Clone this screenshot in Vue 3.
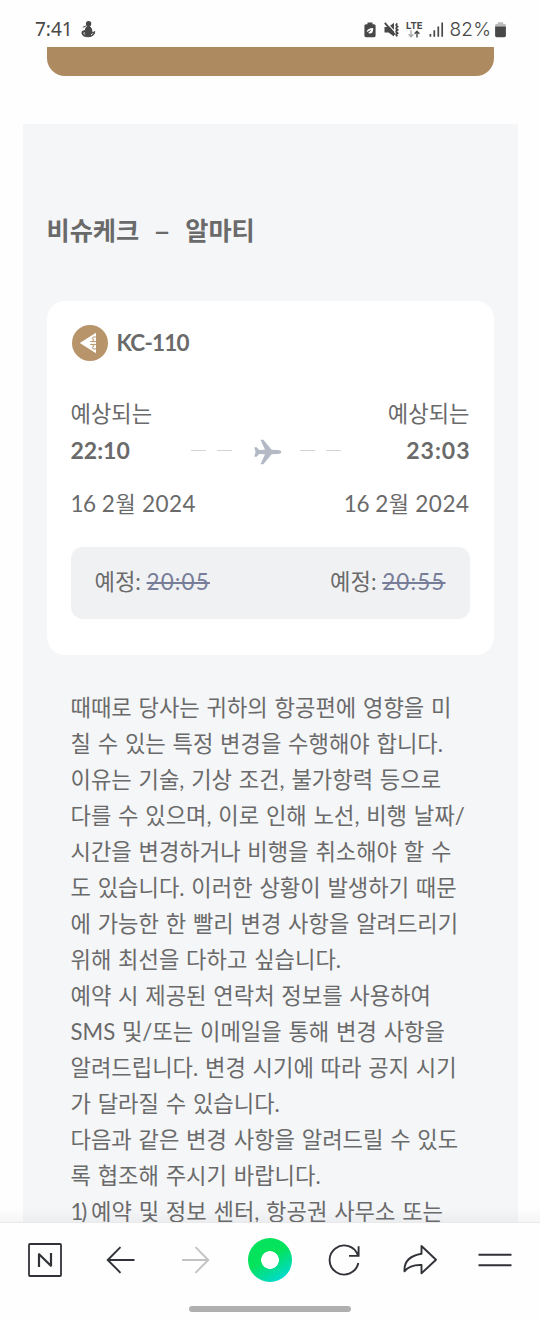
<template>
  <div class="screen">
    <header class="status">
      <span class="clock">7:41</span>
      <svg class="seal" width="15" height="17" viewBox="0 0 15 17">
        <circle cx="7.6" cy="2.8" r="2.7" fill="#484848" />
        <path d="M1.8 6.3 5.5 4.8M7.3 5Q4 6.5 4.4 9.2L1 10.6Q.2 15.8 7.2 15.8 13.6 15.3 13.8 10.6L11.2 11.8Q11 7.3 8.6 5.3z" fill="#484848" stroke="#484848" stroke-width="1" />
        <path d="M3.3 11.4q-.8 1.2.6 2.1M11.6 12.4q-.5 1.2-1.5 1.4" stroke="#fff" stroke-width="1" fill="none" />
      </svg>
      <div class="status-icons">
        <svg width="12" height="16" viewBox="0 0 12 16">
          <path d="M3.5.4h5v1.8H10q1.6 0 1.6 1.6v9.8q0 1.6-1.6 1.6H2Q.4 15.2.4 13.6V3.8Q.4 2.2 2 2.2h1.5z" fill="#484848" />
          <path d="M2.7 10Q3 6.3 9.2 6q.3 5.6-3.4 5.6Q4.6 11.6 4 10.6L6.8 8.3" fill="#fff" />
          <path d="M2.7 11.7 6.7 8.3" stroke="#484848" stroke-width=".8" />
        </svg>
        <svg class="mute" width="16" height="16" viewBox="0 0 16 16">
          <path d="M.5 5h4L10 .8v13.6L4.500 10.600h-4z" fill="#484848" />
          <path d="M2.600.6 10.800 9.600" stroke="#fefefe" stroke-width="1.2" />
          <path d="M.8.8 10.800 12.600" stroke="#484848" stroke-width="1.8" />
          <path d="M13.400 1.500q-2.400 1.600 0 3.200-2.400 1.600 0 3.200-2.400 1.600 0 3.200-2.400 1.400 0 3.200" fill="none" stroke="#484848" stroke-width="1.9" />
        </svg>
        <div class="lte">
          <span>LTE</span>
          <svg width="12" height="8" viewBox="0 0 12 8" fill="none" stroke-width="1.4">
            <path d="M3 .2v6.500M.6 4.200 3 6.800 5.400 4.200" stroke="#aaa" />
            <path d="M9 7.600V1.300M6.600 3.800 9 1.200l2.400 2.600" stroke="#484848" />
          </svg>
        </div>
        <svg class="signal" width="15" height="15" viewBox="0 0 15 15" stroke="#484848" stroke-width="1.7">
          <path d="M1.400 12v2.800M5.300 8.200v6.600M9.300 4.500v10.300M13.200.5v14.300" />
        </svg>
        <span class="percent">82%</span>
        <svg class="battery" width="11" height="16" viewBox="0 0 11 16">
          <path d="M3 .2h5v1.600h1.400q1.500 0 1.500 1.500v1.500H.1V3.300q0-1.500 1.500-1.500H3z" fill="#bbb" />
          <path d="M.1 4.600h10.800v9q0 1.700-1.500 1.700H1.600Q.1 15.300.1 13.600z" fill="#484848" />
        </svg>
      </div>
    </header>

    <main class="content">
      <div class="banner"></div>
      <section class="panel">
        <h2 class="route"><span>비슈케크</span><span class="dash">–</span><span>알마티</span></h2>

        <div class="card">
          <div class="flight">
            <svg width="36" height="36" viewBox="0 0 36 36">
              <circle cx="18" cy="18" r="18" fill="#b8946a" />
              <path d="M7.800 18 24 7.800v20.400z" fill="#fff" />
              <path d="M24.500 12h-2.600q-1.900.2-1.600 1.700.4 1.100 1.800.7M24.500 16.600h-6.300M24.500 19.400h-6.300M21.200 14.800v1.800M21.200 19.400v1.800M24.500 24h-2.600q-1.900-.2-1.600-1.700.4-1.100 1.800-.7" fill="none" stroke="#b8946a" stroke-width="1" />
            </svg>
            <span>KC-110</span>
          </div>

          <div class="row expected">
            <span>예상되는</span>
            <span>예상되는</span>
          </div>
          <div class="row times">
            <b>22:10</b>
            <div class="path">
              <i></i><i></i>
              <svg width="28" height="26" viewBox="0 0 28 26">
                <path d="M.2 8.200h2.500l2.600 2.900 5.700-.4L6.500.7h2.900l8.200 10 5.900.2q3.900.5 3.900 2.100 0 1.600-3.900 2.100l-5.900.2-8.200 10H6.500l4.500-10-5.700-.4-2.600 2.900H.2L1.600 13z" fill="#b4b9c6" />
              </svg>
              <i></i><i></i>
            </div>
            <b class="arrival">23:03</b>
          </div>
          <div class="row dates">
            <span><span class="day">16</span> 2<em>월</em> 2024</span>
            <span><span class="day">16</span> 2<em>월</em> 2024</span>
          </div>

          <div class="row planned">
            <span>예정: <s>20:05</s></span>
            <span>예정: <s>20:55</s></span>
          </div>
        </div>

        <div class="notice">
          <p v-for="line in notice" :key="line">{{ line }}</p>
          <p><span class="number">1)</span> 예약 및 정보 센터, 항공권 사무소 또는</p>
        </div>
      </section>
    </main>

    <nav class="toolbar">
      <div class="buttons">
        <svg width="34" height="34" viewBox="0 0 34 34" fill="none" stroke="#303238" stroke-width="1.8">
          <rect x="1" y="1" width="32" height="32" rx="1" />
          <path d="M11 24V10.500M23 23.500V10M10.600 10.800 23.400 23.200" stroke-width="2.2" />
        </svg>
        <svg width="34" height="34" viewBox="0 0 34 34" fill="none" stroke="#303238" stroke-width="1.9">
          <path d="M31.500 17H5M17.500 4.200 4.700 17 17.500 29.800" />
        </svg>
        <svg width="34" height="34" viewBox="0 0 34 34" fill="none" stroke="#c3c3c3" stroke-width="1.9">
          <path d="M4 17h26M17.500 4.200 30.300 17 17.500 29.800" />
        </svg>
        <div class="green-dot"></div>
        <svg width="34" height="34" viewBox="0 0 34 34" fill="none" stroke="#303238" stroke-width="1.9">
          <path d="M30 12.800A14.500 14.500 0 1 0 30.300 20M21 12.900h9.600V3.300" />
        </svg>
        <svg width="34" height="34" viewBox="0 0 34 34" fill="none" stroke="#303238" stroke-width="1.9" stroke-linejoin="round">
          <path d="M18.500 3 33 16.700 18.500 30.300V22Q7 21.500 1.500 28.300 .5 14 18.500 10.800z" />
        </svg>
        <svg width="34" height="34" viewBox="0 0 34 34" stroke="#303238" stroke-width="1.9">
          <path d="M.5 11.800h33M.5 22.300h33" />
        </svg>
      </div>
      <div class="home"></div>
    </nav>
  </div>
</template>

<script setup>
const notice = [
  '때때로 당사는 귀하의 항공편에 영향을 미',
  '칠 수 있는 특정 변경을 수행해야 합니다.',
  '이유는 기술, 기상 조건, 불가항력 등으로',
  '다를 수 있으며, 이로 인해 노선, 비행 날짜/',
  '시간을 변경하거나 비행을 취소해야 할 수',
  '도 있습니다. 이러한 상황이 발생하기 때문',
  '에 가능한 한 빨리 변경 사항을 알려드리기',
  '위해 최선을 다하고 싶습니다.',
  '예약 시 제공된 연락처 정보를 사용하여',
  'SMS 및/또는 이메일을 통해 변경 사항을',
  '알려드립니다. 변경 시기에 따라 공지 시기',
  '가 달라질 수 있습니다.',
  '다음과 같은 변경 사항을 알려드릴 수 있도',
  '록 협조해 주시기 바랍니다.'
]
</script>

<style>
body {
  background: #fefefe;
}
</style>

<style scoped>
.screen {
  width: 540px;
  height: 1320px;
  display: flex;
  flex-direction: column;
  overflow: hidden;
  background: #fefefe;
  color: #6a6a6a;
  font-family: Lato, "Noto Sans CJK KR", sans-serif;
}

.screen svg {
  display: block;
  flex: none;
}

.status {
  height: 47px;
  flex: none;
  box-sizing: border-box;
  display: flex;
  align-items: center;
  padding: 12px 34.5px 0 35px;
  color: #484848;
}

.clock {
  width: 46px;
  font: 19px/22px "Noto Sans", sans-serif;
  margin-top: -1px;
}

.status-icons {
  display: flex;
  align-items: center;
  margin-left: auto;
}

.mute {
  margin-left: 8px;
}

.lte {
  display: flex;
  flex-direction: column;
  align-items: center;
  margin-left: 6px;
  font: bold 9.5px/9px Inter, sans-serif;
}

.signal {
  margin-left: 6px;
}

.percent {
  width: 43px;
  margin-left: 6px;
  font: 19px/24px Inter, sans-serif;
  font-weight: 300;
  letter-spacing: 0.2px;
}

.battery {
  margin-left: 2px;
}

.content {
  flex: none;
  height: 1175px;
  overflow: hidden;
}

.banner {
  height: 29px;
  margin: 0 46.5px 48px;
  border-radius: 0 0 18px 18px;
  background: #ae8a60;
}

.panel {
  height: 1200px;
  margin: 0 22.5px;
  padding: 88px 24px 0;
  background: #f5f6f8;
}

.route {
  display: flex;
  height: 36px;
  margin: 0 0 53px;
  font-size: 25.2px;
  line-height: 36px;
  font-weight: bold;
}

.dash {
  width: 46px;
  text-align: center;
  transform: scaleX(1.2);
}

.card {
  box-sizing: border-box;
  height: 354px;
  padding: 24px;
  border-radius: 18px;
  background: #fff;
}

.flight {
  display: flex;
  align-items: center;
  height: 36px;
  padding-left: 1px;
  gap: 9px;
  font-size: 22.5px;
  line-height: 34px;
  font-weight: bold;
  letter-spacing: -0.8px;
}

.row {
  display: flex;
  justify-content: space-between;
  align-items: center;
  height: 36px;
  font-size: 22.2px;
  line-height: 36px;
}

.expected {
  margin-top: 35px;
}

.times {
  font-size: 23px;
}

.arrival {
  letter-spacing: 1px;
  margin-right: -1px;
}

.path {
  display: flex;
  align-items: center;
  position: relative;
  left: -2px;
}

.path i {
  width: 15px;
  height: 1px;
  margin-right: 11px;
  background: #d4d4d6;
}

.path svg {
  margin: 4px 18px 0 11px;
}

.path i:last-child {
  margin-right: 0;
}

.dates {
  margin-top: 18px;
  font-size: 22.5px;
  letter-spacing: 0.5px;
}

.day {
  letter-spacing: -0.5px;
}

.dates em {
  font-style: normal;
  font-size: 22px;
  letter-spacing: 0;
}

.planned {
  height: 72px;
  margin-top: 25px;
  padding: 0 24px;
  border-radius: 12px;
  line-height: 34px;
  background: #f0f1f3;
}

.planned span {
  margin-top: -2px;
}

.planned s {
  color: #777d98;
  font-size: 22.5px;
  letter-spacing: 1.1px;
}

.notice {
  padding: 35px 0 0 24px;
  font-size: 22.2px;
  word-spacing: 1.1px;
}

.notice p {
  height: 36px;
  margin: 0;
  line-height: 36px;
  white-space: nowrap;
}

.number {
  margin-right: -1px;
  letter-spacing: -2px;
}

.toolbar {
  flex: 1;
  position: relative;
  border-top: 1px solid #e9e9eb;
  background: #fefefe;
}

/* soft shade cast on the page above the bar */
.toolbar::before {
  content: "";
  position: absolute;
  left: 0;
  right: 0;
  top: -15px;
  height: 14px;
  background: linear-gradient(rgba(80, 80, 90, 0), rgba(80, 80, 90, 0.05));
}

.buttons {
  display: grid;
  grid-template-columns: repeat(7, 75px);
  align-items: center;
  justify-content: center;
  justify-items: center;
  height: 74px;
}

.green-dot {
  box-sizing: border-box;
  width: 44px;
  height: 44px;
  border-radius: 50%;
  background: radial-gradient(circle, #fff 8.5px, transparent 9.2px), linear-gradient(150deg, #05e35c 45%, #00d9d5 90%);
}

.home {
  width: 162px;
  height: 6px;
  margin: 9px auto 0;
  border-radius: 3px;
  background: #afafaf;
}
</style>
